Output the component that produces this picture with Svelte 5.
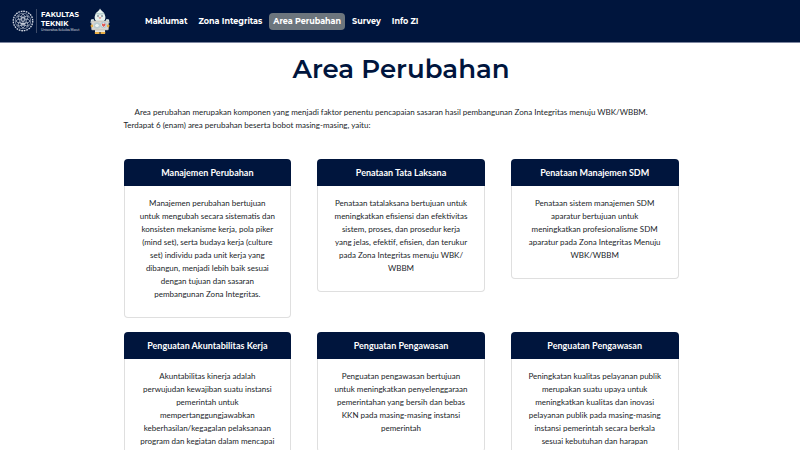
<script>
  const links = ['Maklumat', 'Zona Integritas', 'Area Perubahan', 'Survey', 'Info ZI'];
  const active = 'Area Perubahan';

  const areas = [
    {
      title: 'Manajemen Perubahan',
      lines: ['Manajemen perubahan bertujuan', 'untuk mengubah secara sistematis dan', 'konsisten mekanisme kerja, pola piker', '(mind set), serta budaya kerja (culture', 'set) individu pada unit kerja yang', 'dibangun, menjadi lebih baik sesuai', 'dengan tujuan dan sasaran', 'pembangunan Zona Integritas.']
    },
    {
      title: 'Penataan Tata Laksana',
      lines: ['Penataan tatalaksana bertujuan untuk', 'meningkatkan efisiensi dan efektivitas', 'sistem, proses, dan prosedur kerja', 'yang jelas, efektif, efisien, dan terukur', 'pada Zona Integritas menuju WBK/', 'WBBM']
    },
    {
      title: 'Penataan Manajemen SDM',
      lines: ['Penataan sistem manajemen SDM', 'aparatur bertujuan untuk', 'meningkatkan profesionalisme SDM', 'aparatur pada Zona Integritas Menuju', 'WBK/WBBM']
    },
    {
      title: 'Penguatan Akuntabilitas Kerja',
      lines: ['Akuntabilitas kinerja adalah', 'perwujudan kewajiban suatu instansi', 'pemerintah untuk', 'mempertanggungjawabkan', 'keberhasilan/kegagalan pelaksanaan', 'program dan kegiatan dalam mencapai', 'misi dan tujuan organisasi']
    },
    {
      title: 'Penguatan Pengawasan',
      lines: ['Penguatan pengawasan bertujuan', 'untuk meningkatkan penyelenggaraan', 'pemerintahan yang bersih dan bebas', 'KKN pada masing-masing instansi', 'pemerintah']
    },
    {
      title: 'Penguatan Pengawasan',
      lines: ['Peningkatan kualitas pelayanan publik', 'merupakan suatu upaya untuk', 'meningkatkan kualitas dan inovasi', 'pelayanan publik pada masing-masing', 'instansi pemerintah secara berkala', 'sesuai kebutuhan dan harapan', 'masyarakat']
    }
  ];
  const petals = [0, 45, 90, 135, 180, 225, 270, 315];
</script>

<div class="page">
  <header>
    <a class="brand" href="#beranda" aria-label="Fakultas Teknik">
      <svg class="seal" viewBox="0 0 44 44" aria-hidden="true">
        <g fill="none" stroke="#d5dbe5" stroke-width="1.6">
          <circle cx="22" cy="22" r="19.5" stroke-dasharray="3.4 1.7" stroke-width="2.6" />
          <circle cx="22" cy="22" r="15.5" stroke-width="1" />
          {#each petals as turn}
            <path d="M22 17c-4-3-4-6 0-9 4 3 4 6 0 9z" transform="rotate({turn} 22 22)" />
          {/each}
          <path d="M22 13c-4 5-4 8-1 11M22 13c4 5 4 8 1 11M17 27h10M19 30h6M22 19v12" />
        </g>
      </svg>
      <span class="rule"></span>
      <span class="name">
        <strong>FAKULTAS</strong>
        <strong>TEKNIK</strong>
        <small>Universitas Sebelas Maret</small>
      </span>
      <svg class="mascot" viewBox="0 0 44 54" aria-hidden="true">
        <path d="M14 44h7v8h-9c-1-3 0-5 2-8zM23 44h7c3 3 3 5 2 8h-9z" fill="#e9ae45" />
        <path d="M12 42h20v6H12z" fill="#e9e8e0" />
        <path d="M22 1c1 4 7 6 9 11 3 6 2 11-1 14H14c-3-3-4-8-1-14 2-5 8-6 9-11z" fill="#e6f1ee" />
        <path d="M15 9c4 2 10 2 14 0l2 3c-5 2-13 2-18 0z" fill="#b7cecc" />
        <circle cx="18" cy="16" r="1.4" fill="#243247" />
        <circle cx="26" cy="16" r="1.4" fill="#243247" />
        <path d="M19 19c2 3 4 3 6 0z" fill="#d65c56" />
        <path d="M4 23l5-1 3 6-4 4-5-2zM40 23l-5-1-3 6 4 4 5-2z" fill="#dbe9e8" />
        <rect x="5" y="26" width="34" height="18" rx="2" fill="#d8d6d1" stroke="#aaa8a3" />
        <circle cx="16" cy="35" r="6.5" fill="#b9cbd0" />
        <path d="M12 35c2-4 6-4 8 0-2 4-6 4-8 0z" fill="#edf3f1" />
        <circle cx="29" cy="34" r="5.5" fill="#edf1f2" stroke="#6daac5" />
        <path d="M26 32c2-2 3 0 3 1 1-3 4-2 4 0 0 3-3 4-4 5-1-1-4-3-3-6z" fill="#df5650" />
        <path d="M3 34l5-1v5l-4 1zM41 34l-5-1v5l4 1z" fill="#e5ad45" />
      </svg>
    </a>
    <nav aria-label="Utama">
      {#each links as link}
        <a href="#{link.toLowerCase().replace(' ', '-')}" class:active={link === active} aria-current={link === active ? 'page' : undefined}>{link}</a>
      {/each}
    </nav>
  </header>

  <main>
    <h1>Area Perubahan</h1>
    <p class="intro">
      Area perubahan merupakan komponen yang menjadi faktor penentu pencapaian sasaran hasil pembangunan Zona Integritas menuju WBK/WBBM.<br />Terdapat 6 (enam) area perubahan beserta bobot masing-masing, yaitu:
    </p>
    <div class="cards">
      {#each areas as area}
        <article>
          <h2>{area.title}</h2>
          <p>{#each area.lines as line, i}{#if i}<br />{/if}{line}{/each}</p>
        </article>
      {/each}
    </div>
  </main>
</div>

<style>
  :global(body) { background: #fff; }
  .page {
    height: 100vh;
    overflow: hidden;
    font-family: Lato, "Liberation Sans", sans-serif;
    font-size: 8px;
    line-height: 13px;
    color: #212529;
  }
  header {
    display: flex;
    align-items: center;
    height: 43px;
    padding-left: 12px;
    background: #00153d;
    border-bottom: 1px solid #7d86a0;
    box-sizing: border-box;
  }
  a { color: #fff; text-decoration: none; }
  .brand { display: flex; align-items: center; }
  .seal { width: 22px; height: 22px; margin-right: 2px; }
  .rule { width: 1px; height: 24px; background: #3d4b69; }
  .name {
    display: flex;
    flex-direction: column;
    width: 44px;
    margin: 0 4px;
    font-family: Montserrat, "Open Sans", sans-serif;
    white-space: nowrap;
  }
  .name strong { font-size: 7px; line-height: 9px; font-weight: 700; }
  .name small { font-size: 3px; line-height: 5px; color: #fff; }
  .mascot { width: 22px; height: 27px; }
  nav {
    display: flex;
    gap: 3px;
    margin-left: 30px;
    font-family: Montserrat, Inter, sans-serif;
    font-weight: 700;
    font-size: 8px;
    line-height: 17px;
    white-space: nowrap;
  }
  nav a { padding: 0 4px; border-radius: 4px; }
  nav .active { background: #6c757d; }
  main { max-width: 555px; margin: 0 auto; padding: 8px 0 24px 2px; }
  h1 {
    margin: 0;
    font-family: Montserrat, Inter, sans-serif;
    font-weight: 600;
    font-size: 26px;
    line-height: 36px;
    text-align: center;
    color: #00153d;
  }
  .intro { margin: 19px 0 27px; text-indent: 11px; }
  .cards {
    display: grid;
    grid-template-columns: repeat(3, minmax(0, 1fr));
    gap: 14px 26px;
    align-items: start;
  }
  article { text-align: center; }
  h2 {
    margin: 0;
    padding: 7px 4px;
    border-radius: 4px 4px 0 0;
    background: #00153d;
    color: #fff;
    font-size: 9px;
    line-height: 13px;
    font-weight: 700;
  }
  article p {
    margin: 0;
    padding: 11px 0 16px;
    border: 1px solid #dfdfdf;
    border-top: 0;
    border-radius: 0 0 4px 4px;
    white-space: nowrap;
  }
</style>
